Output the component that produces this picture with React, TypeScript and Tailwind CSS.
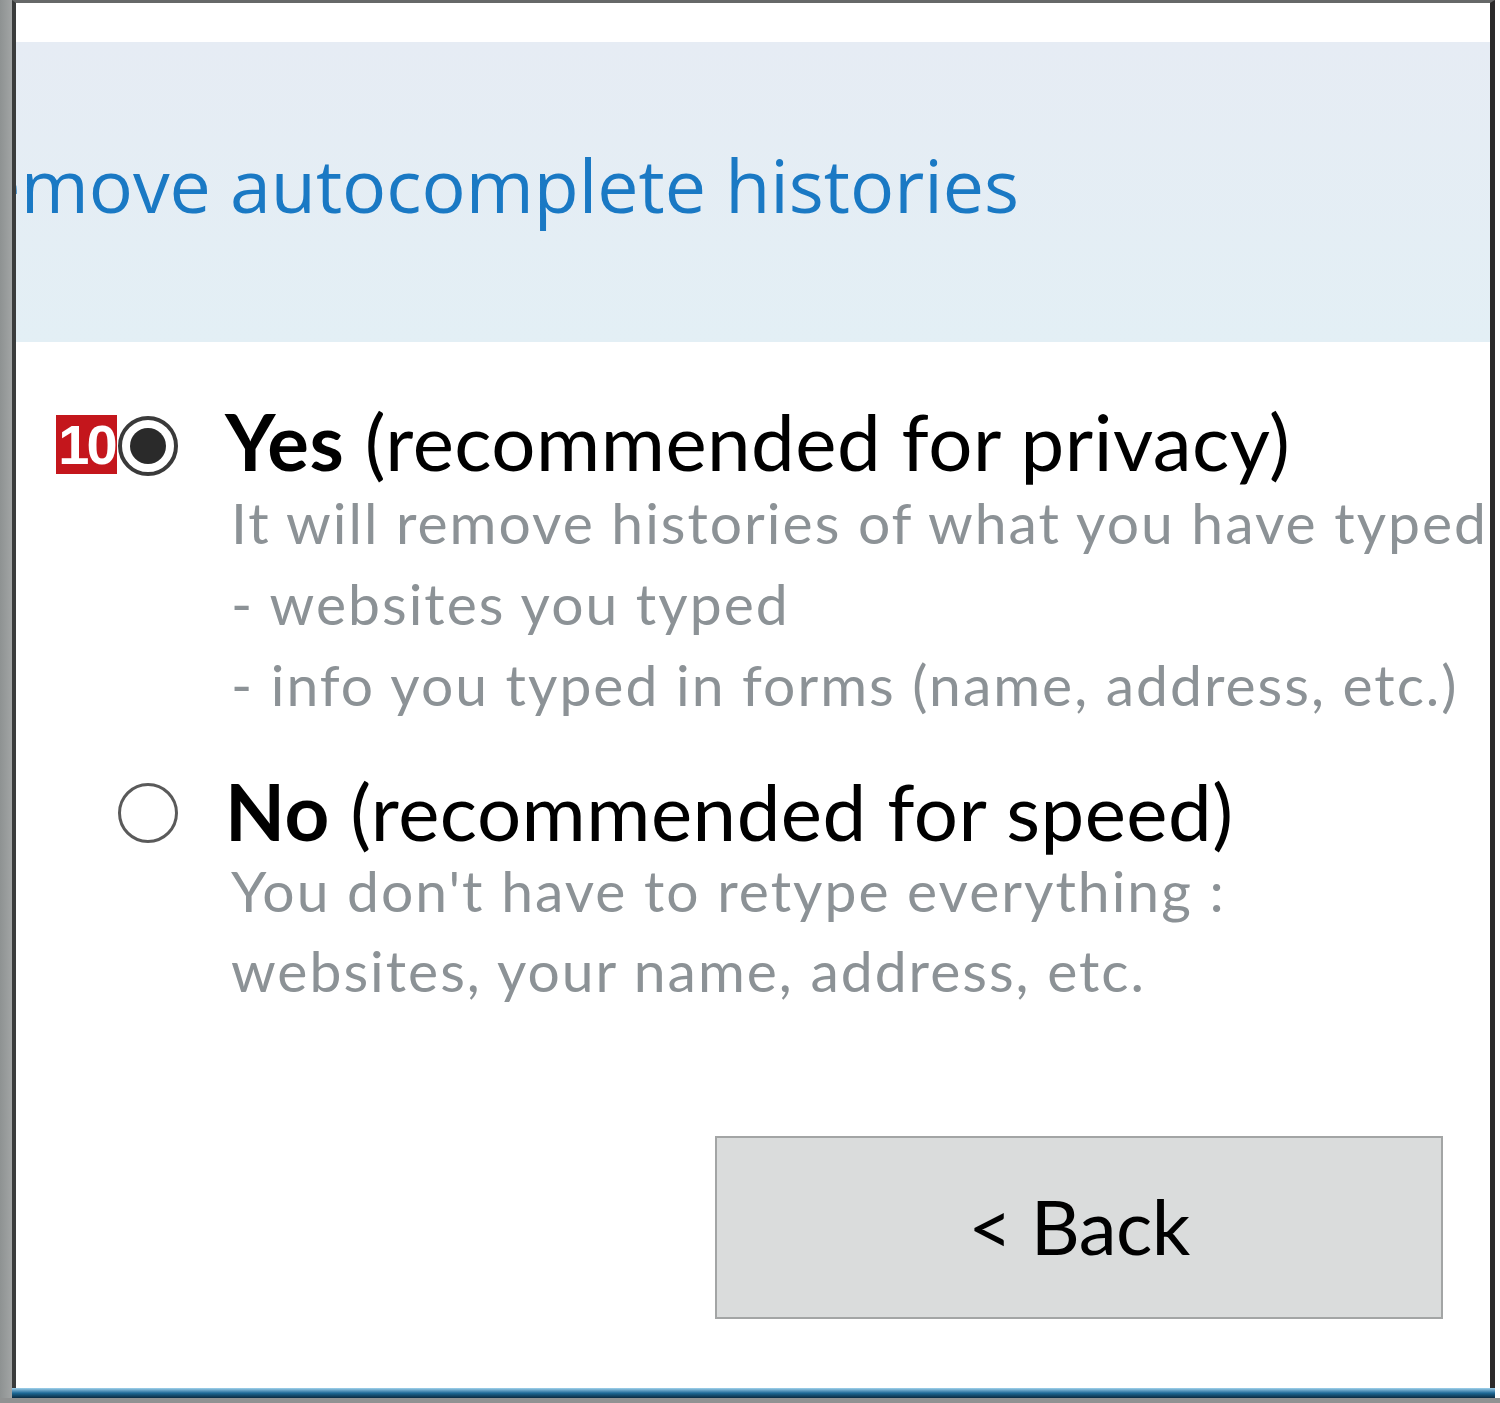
import React from "react";

const body = { fontFamily: "Lato, 'Noto Sans', sans-serif" };
const title = { fontFamily: "'Open Sans', 'Noto Sans', sans-serif" };

function Radio({ checked }: { checked: boolean }) {
  return (
    <div
      className={
        "w-[60px] h-[60px] rounded-full bg-white flex items-center justify-center " +
        (checked ? "border-[4px] border-[#3a3a3a]" : "border-[3px] border-[#5a5a5a]")
      }
    >
      {checked && <div className="w-[36px] h-[36px] rounded-full bg-[#2a2a2a]" />}
    </div>
  );
}

export default function App() {
  return (
    <div className="w-[1500px] h-[1403px] bg-[#999b9b] flex flex-col overflow-hidden">
      <div className="flex h-[1398px]">
        <div className="w-[12px] bg-gradient-to-r from-[#8e9292] to-[#a2a5a5]" />
        <div className="w-[1483px] flex flex-col">
          <div className="flex-1 flex flex-col bg-white border-l-[4px] border-l-[#3a3c3c] border-t-[3px] border-t-[#666868] border-r-[5px] border-r-[#2b2b2b] overflow-hidden">
            <div className="h-[39px] bg-white" />
            <div className="h-[300px] bg-gradient-to-b from-[#e6ecf4] to-[#e3eff5] flex items-center overflow-hidden">
              <div
                className="ml-[-82px] whitespace-nowrap text-[73.5px] leading-none text-[#1a79c4] pb-[14px]"
                style={title}
              >
                Remove autocomplete histories
              </div>
            </div>

            <div className="flex flex-col" style={body}>
              {/* Option Yes */}
              <div className="flex mt-[59px]">
                <div className="w-[209px] flex items-start pt-[14px]">
                  <div className="ml-[40px] w-[61px] h-[59px] bg-[#c4161c] flex items-center justify-center">
                    <span
                      className="text-white font-bold text-[56px] leading-none tracking-[-3px]"
                      style={{ fontFamily: "'Liberation Sans', Arial, sans-serif" }}
                    >
                      10
                    </span>
                  </div>
                  <div className="ml-[1px] mt-[1px]">
                    <Radio checked />
                  </div>
                </div>
                <div className="flex flex-col whitespace-nowrap">
                  <div className="text-[78px] leading-[80px] tracking-[0.5px] text-black">
                    <span className="font-bold">Yes</span> (recommended for privacy)
                  </div>
                  <div className="mt-[1px] pl-[6px] text-[57px] leading-[81px] tracking-[2px] text-[#8c9296]">
                    <div>It will remove histories of what you have typed</div>
                    <div>- websites you typed</div>
                    <div>- info you typed in forms (name, address, etc.)</div>
                  </div>
                </div>
              </div>

              {/* Option No */}
              <div className="flex mt-[46px]">
                <div className="w-[209px] flex items-start pt-[12px]">
                  <div className="ml-[102px]">
                    <Radio checked={false} />
                  </div>
                </div>
                <div className="flex flex-col whitespace-nowrap">
                  <div className="text-[78px] leading-[80px] tracking-[0.5px] text-black">
                    <span className="font-bold">No</span> (recommended for speed)
                  </div>
                  <div className="mt-[-1px] pl-[6px] text-[57px] leading-[80px] tracking-[2px] text-[#8c9296]">
                    <div>You don't have to retype everything :</div>
                    <div>websites, your name, address, etc.</div>
                  </div>
                </div>
              </div>

              <div className="flex justify-end mt-[126px] pr-[47px]">
                <div className="w-[728px] h-[183px] bg-[#dadcdc] border-[2px] border-[#a3a5a5] flex items-center justify-center">
                  <span className="text-[76px] leading-none tracking-[-0.5px] text-black pb-[4px]">&lt; Back</span>
                </div>
              </div>
            </div>
          </div>
          <div className="h-[10px] bg-gradient-to-b from-[#9fd2ec] via-[#1d6b98] to-[#0a2b42]" />
        </div>
        <div className="w-[5px] bg-white" />
      </div>
      <div className="h-[5px] bg-[#909292]" />
    </div>
  );
}
